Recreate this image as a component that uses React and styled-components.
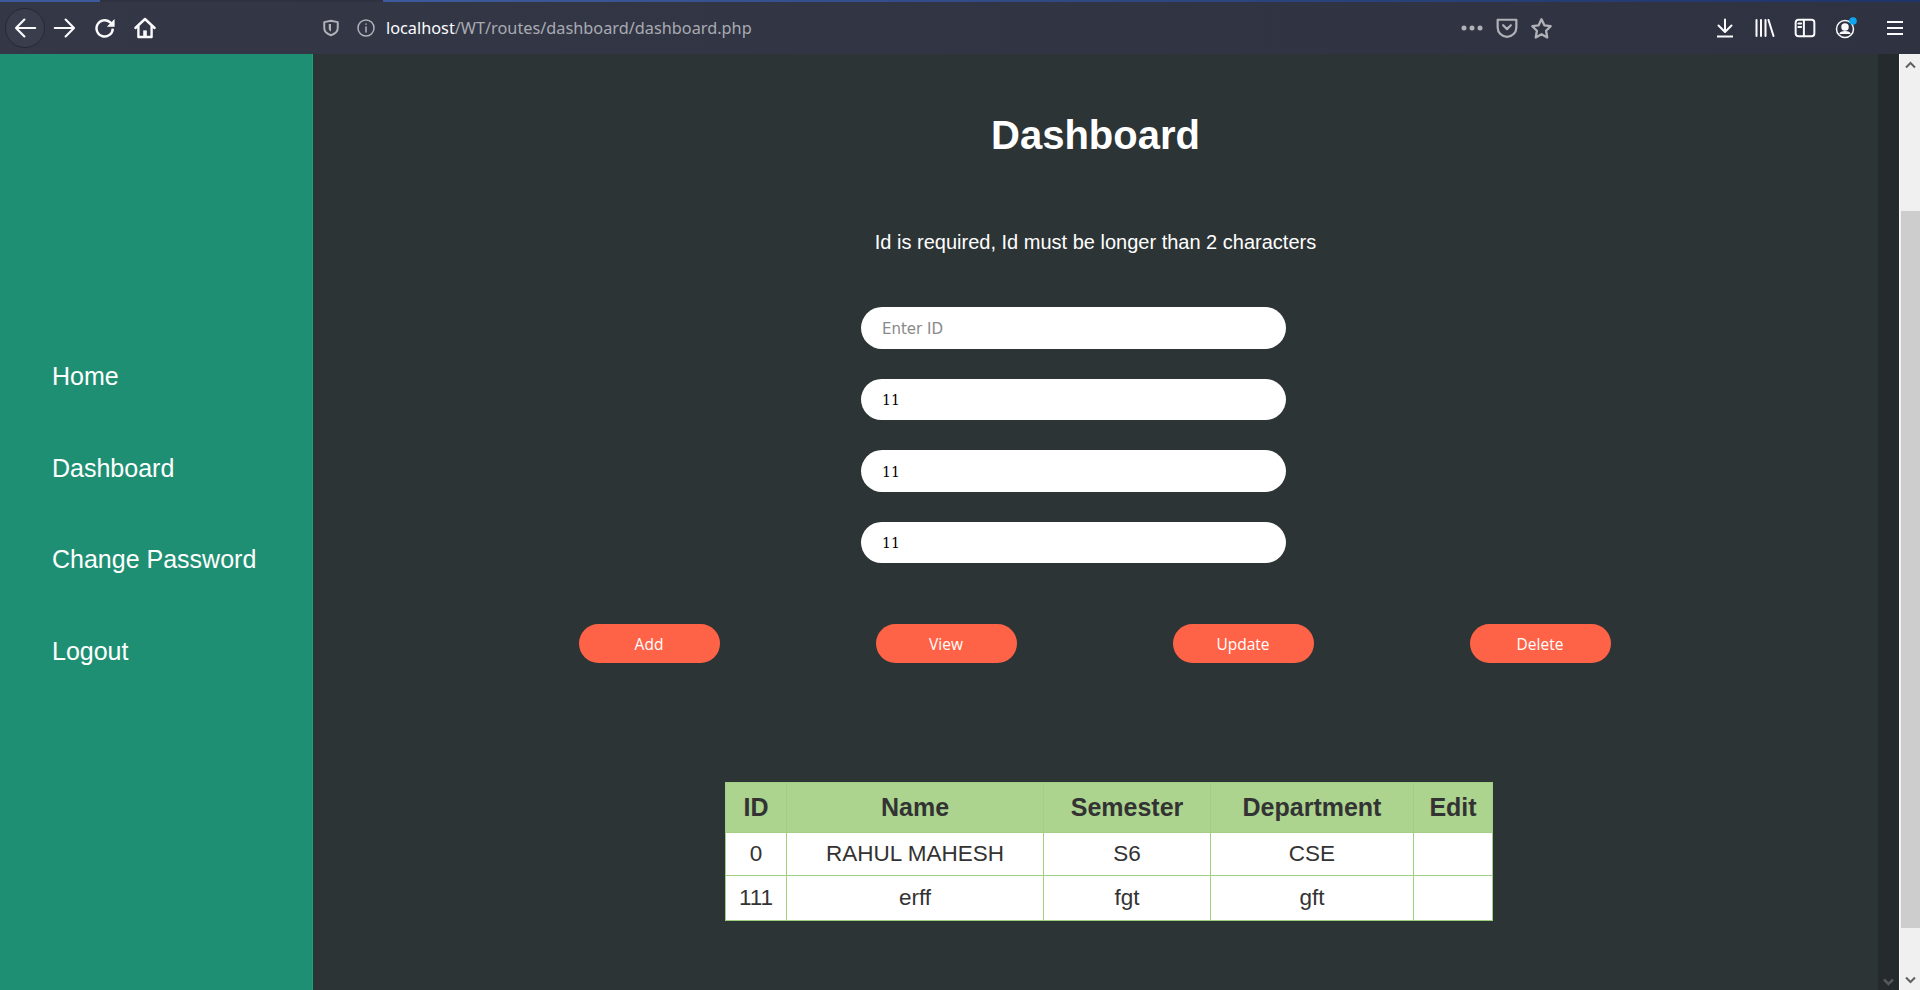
import React from "react";
import styled, { createGlobalStyle } from "styled-components";

const GlobalStyle = createGlobalStyle`
  html, body {
    margin: 0;
    padding: 0;
    height: 100%;
    overflow: hidden;
    font-family: "Liberation Sans", Arial, sans-serif;
  }
  * {
    box-sizing: border-box;
  }
`;

const Page = styled.div`
  display: flex;
  flex-direction: column;
  width: 1920px;
  height: 990px;
  overflow: hidden;
`;

const Toolbar = styled.header`
  position: relative;
  display: flex;
  align-items: center;
  height: 54px;
  flex: none;
  padding-top: 2px;
  background: linear-gradient(90deg, #343846, #2f3240);
`;

const LoadBar = styled.div`
  position: absolute;
  top: 0;
  left: 0;
  right: 0;
  height: 2px;
  background: linear-gradient(90deg, #3d5a9c 0, #3d5a9c 100px, #2f3240 100px, #2f3240 383px, #3d5a9c 383px, #1f3468 100%);
`;

const NavIcons = styled.div`
  display: flex;
  align-items: center;
  width: 319px;
  padding-left: 5px;
`;

const IconSlot = styled.span`
  display: flex;
  align-items: center;
  justify-content: center;
  flex: none;
  width: ${(p) => p.$w || 40}px;
  height: 40px;
  margin-left: ${(p) => p.$gap || 0}px;
  border-radius: 50%;
  border: ${(p) => (p.$ring ? "1px solid #262833" : "none")};
  background: ${(p) => (p.$ring ? "#3a3e4c" : "transparent")};
  color: ${(p) => p.$color || "#fbfbfe"};
`;

const Url = styled.div`
  margin-left: 8px;
  font-family: "Noto Sans", sans-serif;
  font-size: 16.3px;
  color: #a9abb3;
  white-space: nowrap;
  b {
    font-weight: 400;
    color: #fbfbfe;
  }
`;

const UrlActions = styled.div`
  display: flex;
  align-items: center;
  margin-left: auto;
  margin-right: 146px;
`;

const RightIcons = styled.div`
  display: flex;
  align-items: center;
`;

const Body = styled.div`
  display: flex;
  flex: 1;
  min-height: 0;
`;

const Sidebar = styled.nav`
  display: flex;
  flex-direction: column;
  gap: 57.5px;
  width: 313px;
  flex: none;
  padding: 305px 0 0 52px;
  background: #1f8f73;
  border-right: 1px solid #14a37f;
`;

const SideLink = styled.a`
  font-size: 25px;
  line-height: 34px;
  color: #fff;
`;

const Main = styled.main`
  flex: 1;
  display: flex;
  flex-direction: column;
  align-items: center;
  background: #2d3436;
`;

const Title = styled.h1`
  margin: 59px 0 0;
  font-size: 40px;
  line-height: 44px;
  font-weight: 700;
  color: #fff;
`;

const Message = styled.p`
  margin: 73px 0 0;
  font-size: 20px;
  line-height: 24px;
  color: #fff;
`;

const Form = styled.form`
  display: flex;
  flex-direction: column;
  gap: 30px;
  margin: 53px 44px 0 0;
`;

const Field = styled.input`
  display: block;
  width: 425px;
  height: 41.5px;
  padding: 2px 21px 0;
  border: none;
  border-radius: 21px;
  outline: none;
  background: #fff;
  color: #000;
  font-family: "DejaVu Serif", serif;
  font-size: 14px;
  &::placeholder {
    color: #8a8a8a;
    font-family: "DejaVu Sans", sans-serif;
    font-size: 15px;
  }
`;

const Actions = styled.div`
  display: grid;
  grid-template-columns: repeat(4, 297px);
  justify-items: center;
  margin: 61px 2px 0 0;
`;

const ActionButton = styled.button`
  width: 141px;
  height: 39px;
  border: none;
  border-radius: 20px;
  background: #ff6347;
  color: #fff;
  font-family: "Open Sans", sans-serif;
  font-size: 15.5px;
`;

const Table = styled.table`
  width: 767px;
  margin: 119px 0 0 27px;
  border-collapse: collapse;
  table-layout: fixed;
  background: #fff;
  color: #333;
  font-size: 22.5px;
  text-align: center;
  th, td {
    padding: 0;
    border: 1px solid #9fcf7f;
  }
  th {
    height: 50px;
    background: #acd48f;
    font-size: 25px;
    border-color: #a3cf85;
  }
  td {
    height: 45px;
  }
  tbody tr:first-child td {
    height: 43px;
  }
`;

const Gutter = styled.div`
  position: relative;
  width: 21px;
  flex: none;
  background: #252a2c;
`;

const GutterArrow = styled.svg`
  position: absolute;
  bottom: 4px;
  left: 5px;
`;

const Scrollbar = styled.div`
  display: flex;
  flex-direction: column;
  align-items: center;
  width: 21px;
  flex: none;
  background: #f0f0f0;
  border-left: 1px solid #fff;
  color: #606060;
`;

const ArrowBox = styled.div`
  display: flex;
  align-items: center;
  justify-content: center;
  height: 21px;
  flex: none;
`;

const Thumb = styled.div`
  width: 19px;
  height: 717px;
  margin-top: 136px;
  background: #cdcdcd;
`;

const Spacer = styled.div`
  flex: 1;
`;

const Svg = ({ size = 20, children, ...rest }) => (
  <svg
    width={size}
    height={size}
    viewBox="0 0 20 20"
    fill="none"
    stroke="currentColor"
    strokeWidth="2"
    strokeLinecap="round"
    strokeLinejoin="round"
    {...rest}
  >
    {children}
  </svg>
);

const rows = [
  ["0", "RAHUL MAHESH", "S6", "CSE", ""],
  ["111", "erff", "fgt", "gft", ""],
];

export default function App() {
  return (
    <Page>
      <GlobalStyle />
      <Toolbar>
        <LoadBar />
        <NavIcons>
          <IconSlot $ring>
            <Svg size={24} strokeWidth="1.800"><path d="M18.500 10H2.500M9.500 3 2.500 10l7 7" /></Svg>
          </IconSlot>
          <IconSlot>
            <Svg size={24} strokeWidth="1.800"><path d="M1.500 10h16M10.500 3l7 7-7 7" /></Svg>
          </IconSlot>
          <IconSlot>
            <svg width="24" height="24" viewBox="0 0 20 20" fill="none" stroke="currentColor" strokeWidth="2">
              <path d="M16.500 10.500a6.800 6.800 0 1 1-2.300-5.300l2 2" />
              <path d="M18 2.500V9h-6.500Z" fill="currentColor" stroke="none" />
            </svg>
          </IconSlot>
          <IconSlot>
            <svg width="24" height="24" viewBox="0 0 20 20" fill="none" stroke="currentColor" strokeWidth="2" strokeLinejoin="round" strokeLinecap="round">
              <path d="M2 10 10 2.500 18 10" />
              <path d="M4.500 9v8.500h11V9" />
              <rect x="8.500" y="12" width="3" height="5.500" fill="currentColor" stroke="none" />
            </svg>
          </IconSlot>
        </NavIcons>
        <IconSlot $w={24} $color="#b1b1b8">
          <svg width="18" height="18" viewBox="0 0 20 20" fill="none" stroke="currentColor" strokeWidth="2.200" strokeLinejoin="round">
            <path d="M2.500 3.500 10 2l7.500 1.500V10c0 4-3 6.500-7.500 8-4.500-1.500-7.500-4-7.500-8Z" />
            <path d="M7.500 5.500h2.500v8.500c-1.500-.8-2.500-2-2.500-3.500Z" fill="currentColor" stroke="none" />
          </svg>
        </IconSlot>
        <IconSlot $w={24} $gap={11} $color="#b1b1b8">
          <Svg size={20} strokeWidth="1.500"><circle cx="10" cy="10" r="8" /><path d="M10 9v5M10 6v.2" /></Svg>
        </IconSlot>
        <Url><b>localhost</b>/WT/routes/dashboard/dashboard.php</Url>
        <UrlActions>
          <IconSlot $w={35} $color="#b1b1b8">
            <svg width="22" height="6" viewBox="0 0 22 6" fill="currentColor"><circle cx="3" cy="3" r="2.500" /><circle cx="11" cy="3" r="2.500" /><circle cx="19" cy="3" r="2.500" /></svg>
          </IconSlot>
          <IconSlot $w={35} $color="#b1b1b8">
            <Svg size={22}><path d="M1.500 2.500h17v7a8.500 8.500 0 0 1-17 0Z" /><path d="m6.500 7.500 3.500 3.500 3.500-3.500" /></Svg>
          </IconSlot>
          <IconSlot $w={35} $color="#b1b1b8">
            <Svg size={23}><path d="m10 2 2.500 5.200 5.500.8-4 4 1 5.800-5-2.800-5 2.800 1-5.800-4-4 5.500-.8Z" /></Svg>
          </IconSlot>
        </UrlActions>
        <RightIcons>
          <IconSlot>
            <Svg size={20}><path d="M10 1.500V13M3.500 7.500 10 14l6.500-6.500" /><path d="M2 18.500h16" strokeLinecap="butt" /></Svg>
          </IconSlot>
          <IconSlot>
            <svg width="20" height="18" viewBox="0 0 20 18" fill="none" stroke="currentColor" strokeWidth="2" strokeLinecap="round">
              <path d="M1.500 1v16M6 1v16M10.500 1v16M13.500 1 18.500 17" />
            </svg>
          </IconSlot>
          <IconSlot>
            <Svg size={22} strokeWidth="1.800"><rect x="1.500" y="2.500" width="17" height="15" rx="2.500" /><path d="M9 2.500v15M4 6h2.500M4 9h2.500" /></Svg>
          </IconSlot>
          <IconSlot>
            <svg width="26" height="26" viewBox="0 0 26 26" fill="none" stroke="currentColor" strokeWidth="1.500">
              <circle cx="13" cy="14" r="8.500" />
              <circle cx="13" cy="12" r="3" fill="currentColor" />
              <path d="M8 19c1-3 9-3 10 0" fill="currentColor" />
              <circle cx="21" cy="6" r="3.800" fill="#0ea5f0" stroke="none" />
            </svg>
          </IconSlot>
          <IconSlot $w={50} $gap={5}>
            <svg width="16" height="16" viewBox="0 0 16 16" stroke="currentColor" strokeWidth="2"><path d="M0 2h16M0 8h16M0 14h16" /></svg>
          </IconSlot>
        </RightIcons>
      </Toolbar>
      <Body>
        <Sidebar>
          <SideLink>Home</SideLink>
          <SideLink>Dashboard</SideLink>
          <SideLink>Change Password</SideLink>
          <SideLink>Logout</SideLink>
        </Sidebar>
        <Main>
          <Title>Dashboard</Title>
          <Message>Id is required, Id must be longer than 2 characters</Message>
          <Form>
            <Field placeholder="Enter ID" />
            <Field defaultValue="11" />
            <Field defaultValue="11" />
            <Field defaultValue="11" />
          </Form>
          <Actions>
            {["Add", "View", "Update", "Delete"].map((label) => (
              <ActionButton type="button" key={label}>{label}</ActionButton>
            ))}
          </Actions>
          <Table>
            <colgroup>
              <col style={{ width: 61 }} />
              <col style={{ width: 257 }} />
              <col style={{ width: 167 }} />
              <col style={{ width: 203 }} />
              <col style={{ width: 79 }} />
            </colgroup>
            <thead>
              <tr>
                {["ID", "Name", "Semester", "Department", "Edit"].map((h) => (
                  <th key={h}>{h}</th>
                ))}
              </tr>
            </thead>
            <tbody>
              {rows.map((row) => (
                <tr key={row[0]}>
                  {row.map((cell, i) => (
                    <td key={i}>{cell}</td>
                  ))}
                </tr>
              ))}
            </tbody>
          </Table>
        </Main>
        <Gutter>
          <GutterArrow width="11" height="8" viewBox="0 0 11 8" fill="none" stroke="#55595c" strokeWidth="2.500">
            <path d="m1 1.500 4.500 4.500L10 1.500" />
          </GutterArrow>
        </Gutter>
        <Scrollbar>
          <ArrowBox>
            <svg width="11" height="8" viewBox="0 0 11 8" fill="none" stroke="currentColor" strokeWidth="2"><path d="m1 6.500 4.500-4.500L10 6.500" /></svg>
          </ArrowBox>
          <Thumb />
          <Spacer />
          <ArrowBox>
            <svg width="11" height="8" viewBox="0 0 11 8" fill="none" stroke="currentColor" strokeWidth="2"><path d="m1 1.500 4.500 4.500L10 1.500" /></svg>
          </ArrowBox>
        </Scrollbar>
      </Body>
    </Page>
  );
}
